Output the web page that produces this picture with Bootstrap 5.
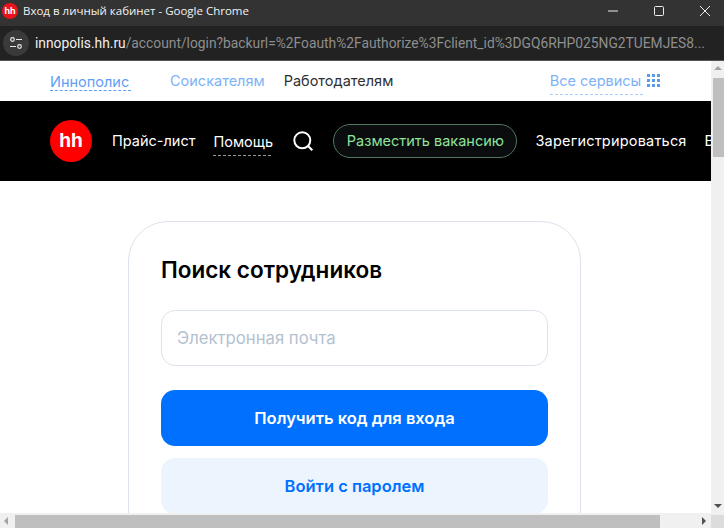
<!DOCTYPE html>
<html lang="ru">
<head>
<meta charset="utf-8">
<title>Вход в личный кабинет</title>
<link href="https://cdn.jsdelivr.net/npm/bootstrap@5.3.0/dist/css/bootstrap.min.css" rel="stylesheet">
<style>
html,body{height:528px;overflow:hidden;margin:0}
body{font-family:Inter,"Liberation Sans",sans-serif;background:#fff;width:724px}
.win-title{height:26px;background:#333;color:#f2f2f2;font:11.5px/18px "Open Sans","Noto Sans",sans-serif;padding:0 0 4px 2px;flex:none}
.fav{width:16px;height:16px;border-radius:50%;background:#e8141c;color:#fff;font:700 9px/16px Inter,sans-serif;text-align:center}
.win-title .ttl{margin-left:5px}
.wbtns{margin-left:auto;margin-right:-4px}
.wbtn{width:46px;height:22px}
.addr{height:35px;background:#222;border-bottom:1px solid #555;color:#8f8f8f;font:13.8px/34px Roboto,sans-serif;white-space:nowrap;padding-left:3px;flex:none}
.tune{width:26px;height:26px;border-radius:50%;background:#3a3a3a;margin-right:6px;flex:none}
.addr b{font-weight:400;color:#f0f0f0}
.viewarea{height:452px;flex:none}
.pagebox{width:711px;overflow:hidden;min-width:0}
.topnav{height:40px;font-size:14.5px;padding:0 0 1px 50px;color:#333;flex:none}
.city{color:#5f9ef5;border-bottom:1px dashed #5f9ef5;line-height:17px;margin-top:3px;width:81px;white-space:nowrap}
.seek{color:#7db2f8;margin-left:39px;white-space:nowrap}
.empl{margin-left:19px;color:#303030;width:110px;white-space:nowrap}
.allsvc{margin-left:156px;color:#7db2f8;border-bottom:1px dashed #a9cdfa;line-height:20px;padding-bottom:3px;margin-top:4px;width:93px;white-space:nowrap}
.dots{display:grid;grid-template-columns:repeat(3,3px);gap:2px;margin-left:4px;margin-top:-1px}
.dots i{width:3px;height:3px;background:#5b9ce6;display:block}
.blackbar{height:80px;background:#000;color:#fff;padding-left:50px;font-size:14.5px;white-space:nowrap;flex:none}
.hhlogo{width:42px;height:42px;border-radius:50%;background:#f00;color:#fff;font:700 19px/42px Inter,sans-serif;text-align:center;margin-right:20px;flex:none}
.help{border-bottom:1px dashed #999;line-height:22px;padding-bottom:2px;margin:5px 0 0 18px;width:58px}
.srch{margin:0 20px 0 22px;flex:none}
.postbtn{height:34px;width:184px;border:1px solid #52775c;border-radius:17px;background:#0a0c0d;color:#8fe39c;line-height:32px;text-align:center;flex:none}
.reg{margin-left:18px;letter-spacing:.2px}
.log{margin-left:18px}
.mainpad{padding:40px 0 0 128px}
.logincard{width:453px;height:400px;border:1px solid #dce3ec;border-radius:40px;padding:30px 32px 32px;flex:none}
.logincard h1{font-size:22.5px;font-weight:600;color:#000;line-height:36px;margin:0 0 22px;letter-spacing:0}
.mailfield{height:56px;width:387px;border:1px solid #dce3ec;border-radius:14px;color:#b4c1cf;font-size:16.7px;line-height:54px;padding-left:15px;box-shadow:none;background:#fff}
.mailfield::placeholder{color:#b4c1cf;opacity:1}
.actbtn{display:block;width:387px;height:56px;border:0;border-radius:14px;font-size:16.5px;font-weight:600;padding:0}
.primarybtn{background:#0070ff;color:#fff;margin-top:24px}
.softbtn{background:#ecf4fe;color:#0070ff;margin-top:12px}
.vbar{width:13px;background:#f0f0f0;flex:none;position:relative}
.hbar{height:15px;background:#f0f0f0;flex:none}
.thumbv{position:absolute;left:2px;right:0;top:17px;height:79px;background:#bfbfbf}
.thumbh{position:absolute;left:15px;top:2px;bottom:0;background:#bfbfbf;width:645px}
.arrowt{position:absolute;left:3px;top:5px;width:0;height:0;border:4px solid transparent;border-bottom:4px solid #a3a3a3;border-top:0}
.arrowb{position:absolute;left:3px;bottom:5px;width:0;height:0;border:4px solid transparent;border-top:4px solid #505050;border-bottom:0}
.arrowl{position:absolute;left:4px;top:4px;width:0;height:0;border:4px solid transparent;border-right:4px solid #a3a3a3;border-left:0}
.arrowr{position:absolute;right:18px;top:4px;width:0;height:0;border:4px solid transparent;border-left:4px solid #505050;border-right:0}
.corner{position:absolute;right:0;top:2px;bottom:0;width:13px;background:#dcdcdc}
</style>
</head>
<body class="d-flex flex-column">
<div class="win-title d-flex align-items-center">
  <div class="fav">hh</div><span class="ttl">Вход в личный кабинет - Google Chrome</span>
  <div class="wbtns d-flex">
    <div class="wbtn d-flex align-items-center justify-content-center"><svg width="12" height="12"><path d="M1 6h10" stroke="#eee"/></svg></div>
    <div class="wbtn d-flex align-items-center justify-content-center"><svg width="12" height="12"><rect x="1.5" y="1.5" width="9" height="9" rx="1" fill="none" stroke="#eee"/></svg></div>
    <div class="wbtn d-flex align-items-center justify-content-center"><svg width="12" height="12"><path d="M1 1l10 10M11 1L1 11" stroke="#eee"/></svg></div>
  </div>
</div>
<div class="addr d-flex align-items-center">
  <div class="tune d-flex align-items-center justify-content-center"><svg width="14" height="14" viewBox="0 0 14 14" fill="none" stroke="#e8e8e8" stroke-width="1.2"><circle cx="3.5" cy="3.5" r="1.8"/><path d="M7 3.5h6M1 10.5h6"/><circle cx="10.5" cy="10.5" r="1.8"/></svg></div>
  <span><b>innopolis.hh.ru</b>/account/login?backurl=%2Foauth%2Fauthorize%3Fclient_id%3DGQ6RHP025NG2TUEMJES8...</span>
</div>
<div class="viewarea d-flex">
  <div class="pagebox d-flex flex-column">
    <div class="topnav d-flex align-items-center">
      <span class="city">Иннополис</span>
      <span class="seek">Соискателям</span>
      <span class="empl">Работодателям</span>
      <span class="allsvc">Все сервисы</span>
      <span class="dots"><i></i><i></i><i></i><i></i><i></i><i></i><i></i><i></i><i></i></span>
    </div>
    <div class="blackbar d-flex align-items-center">
      <div class="hhlogo">hh</div>
      <span>Прайс-лист</span>
      <span class="help">Помощь</span>
      <svg class="srch" width="20" height="20" viewBox="0 0 20 20" fill="none" stroke="#fff" stroke-width="2"><circle cx="9.3" cy="9.3" r="8"/><path d="M15 15l4.3 4.3"/></svg>
      <span class="postbtn">Разместить вакансию</span>
      <span class="reg">Зарегистрироваться</span>
      <span class="log">Войти</span>
    </div>
    <div class="mainpad">
      <div class="logincard">
        <h1>Поиск сотрудников</h1>
        <input class="mailfield form-control" type="text" placeholder="Электронная почта">
        <button class="actbtn primarybtn btn">Получить код для входа</button>
        <button class="actbtn softbtn btn">Войти с паролем</button>
      </div>
    </div>
  </div>
  <div class="vbar"><div class="arrowt"></div><div class="thumbv"></div><div class="arrowb"></div></div>
</div>
<div class="hbar position-relative"><div class="arrowl"></div><div class="thumbh"></div><div class="arrowr"></div><div class="corner"></div></div>
<script src="https://cdn.jsdelivr.net/npm/bootstrap@5.3.0/dist/js/bootstrap.bundle.min.js"></script>
</body>
</html>
